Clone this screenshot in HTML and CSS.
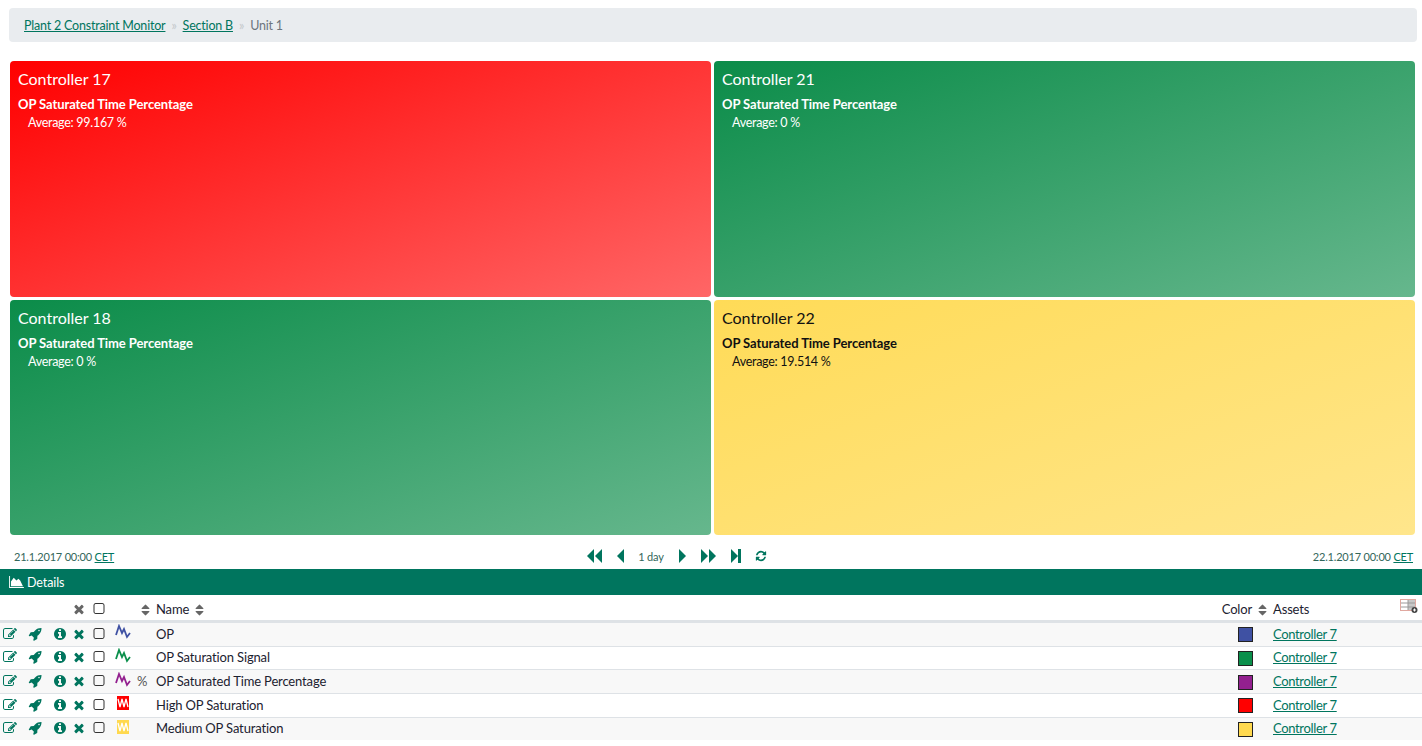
FILE: index.html
```html
<!DOCTYPE html>
<html>
<head>
	<title>Unit 1</title>
	<link rel="stylesheet" href="styles.css">
</head>
<body>
	<svg class="defs" width="0" height="0">
		<symbol id="i-edit" viewBox="0 0 1792 1792"><path d="M888 1184l116-116-152-152-116 116v56h96v96h56zm440-720q-16-16-33 1l-350 350q-17 17-1 33t33-1l350-350q17-17 1-33zm80 594v190q0 119-84.5 203.5t-203.5 84.5h-832q-119 0-203.5-84.5t-84.5-203.5v-832q0-119 84.5-203.5t203.5-84.5h832q63 0 117 25 15 7 18 23 3 17-9 29l-49 49q-14 14-32 8-23-6-45-6h-832q-66 0-113 47t-47 113v832q0 66 47 113t113 47h832q66 0 113-47t47-113v-126q0-13 9-22l64-64q15-15 35-7t20 29zm-96-738l288 288-672 672h-288v-288zm444 132l-92 92-288-288 92-92q28-28 68-28t68 28l152 152q28 28 28 68t-28 68z"/></symbol>
		<symbol id="i-rocket" viewBox="0 0 1792 1792"><path d="M1504 448q0-40-28-68t-68-28-68 28-28 68 28 68 68 28 68-28 28-68zm224-288q0 249-75.5 430.5t-253.5 360.5q-81 80-195 176l-20 379q-2 16-16 26l-384 224q-7 4-16 4-12 0-23-9l-64-64q-13-14-8-32l85-276-281-281-276 85q-3 1-9 1-14 0-23-9l-64-64q-17-19-5-39l224-384q10-14 26-16l379-20q96-114 176-195 188-187 358-258t431-71q14 0 24 9.5t10 22.5z"/></symbol>
		<symbol id="i-info" viewBox="0 0 1792 1792"><path d="M1152 1376v-160q0-14-9-23t-23-9h-96v-512q0-14-9-23t-23-9h-320q-14 0-23 9t-9 23v160q0 14 9 23t23 9h96v320h-96q-14 0-23 9t-9 23v160q0 14 9 23t23 9h448q14 0 23-9t9-23zm-128-896v-160q0-14-9-23t-23-9h-192q-14 0-23 9t-9 23v160q0 14 9 23t23 9h192q14 0 23-9t9-23zm640 416q0 209-103 385.5t-279.5 279.5-385.5 103-385.5-103-279.5-279.5-103-385.5 103-385.5 279.5-279.5 385.5-103 385.5 103 279.5 279.5 103 385.5z"/></symbol>
		<symbol id="i-times" viewBox="0 0 1792 1792"><path d="M1490 1322q0 40-28 68l-136 136q-28 28-68 28t-68-28l-294-294-294 294q-28 28-68 28t-68-28l-136-136q-28-28-28-68t28-68l294-294-294-294q-28-28-28-68t28-68l136-136q28-28 68-28t68 28l294 294 294-294q28-28 68-28t68 28l136 136q28 28 28 68t-28 68l-294 294 294 294q28 28 28 68z"/></symbol>
		<symbol id="i-square" viewBox="0 0 1408 1792"><path d="M1120 256h-832q-66 0-113 47t-47 113v832q0 66 47 113t113 47h832q66 0 113-47t47-113v-832q0-66-47-113t-113-47zm288 160v832q0 119-84.5 203.5t-203.5 84.5h-832q-119 0-203.5-84.5t-84.5-203.5v-832q0-119 84.5-203.5t203.5-84.5h832q119 0 203.5 84.5t84.5 203.5z"/></symbol>
		<symbol id="i-sort" viewBox="0 0 1024 1792"><path d="M1024 1088q0 26-19 45l-448 448q-19 19-45 19t-45-19l-448-448q-19-19-19-45t19-45 45-19h896q26 0 45 19t19 45zm0-384q0 26-19 45t-45 19h-896q-26 0-45-19t-19-45 19-45l448-448q19-19 45-19t45 19l448 448q19 19 19 45z"/></symbol>
		<symbol id="i-refresh" viewBox="0 0 1792 1792"><path d="M1639 1056q0 5-1 7-64 268-268 434.5t-478 166.5q-146 0-282.5-55t-243.5-157l-129 129q-19 19-45 19t-45-19-19-45v-448q0-26 19-45t45-19h448q26 0 45 19t19 45-19 45l-137 137q71 66 161 102t187 36q134 0 250-65t186-179q11-17 53-117 8-23 30-23h192q13 0 22.5 9.5t9.5 22.5zm25-800v448q0 26-19 45t-45 19h-448q-26 0-45-19t-19-45 19-45l138-138q-148-137-349-137-134 0-250 65t-186 179q-11 17-53 117-8 23-30 23h-199q-13 0-22.5-9.5t-9.5-22.5v-7q65-268 270-434.5t480-166.5q146 0 284 55.5t245 156.5l130-129q19-19 45-19t45 19 19 45z"/></symbol>
		<symbol id="i-spark" viewBox="0 0 16 16"><polyline points="1,11 4,2 7,9 9,5 12,13 15,9" fill="none" stroke="currentColor" stroke-width="1.8"/></symbol>
		<symbol id="i-band" viewBox="0 0 12 14"><rect width="12" height="14" fill="currentColor"/><polyline points="1,3 3,11 5,3 7,11 9,3 11,11" fill="none" stroke="#fff" stroke-width="1.3"/></symbol>
	</svg>

	<div class="breadcrumb">
		<a href="#">Plant 2 Constraint Monitor</a>
		<span class="sep">»</span>
		<a href="#">Section B</a>
		<span class="sep">»</span>
		<span class="current">Unit 1</span>
	</div>

	<div class="tiles">
		<div class="tile red">
			<div class="tile-title">Controller 17</div>
			<div class="tile-label">OP Saturated Time Percentage</div>
			<div class="tile-value">Average: 99.167 %</div>
		</div>
		<div class="tile green">
			<div class="tile-title">Controller 21</div>
			<div class="tile-label">OP Saturated Time Percentage</div>
			<div class="tile-value">Average: 0 %</div>
		</div>
		<div class="tile green">
			<div class="tile-title">Controller 18</div>
			<div class="tile-label">OP Saturated Time Percentage</div>
			<div class="tile-value">Average: 0 %</div>
		</div>
		<div class="tile yellow">
			<div class="tile-title">Controller 22</div>
			<div class="tile-label">OP Saturated Time Percentage</div>
			<div class="tile-value">Average: 19.514 %</div>
		</div>
	</div>

	<div class="timebar">
		<div class="time-edge">21.1.2017 00:00 <a href="#">CET</a></div>
		<div class="time-nav">
			<svg class="nav-icon wide" viewBox="0 0 16 14"><polygon points="8,0 8,14 1,7"/><polygon points="16,0 16,14 9,7"/></svg>
			<svg class="nav-icon" viewBox="0 0 8 14"><polygon points="8,0 8,14 1,7"/></svg>
			<span class="range">1 day</span>
			<svg class="nav-icon" viewBox="0 0 8 14"><polygon points="0,0 0,14 7,7"/></svg>
			<svg class="nav-icon wide" viewBox="0 0 16 14"><polygon points="0,0 0,14 7,7"/><polygon points="8,0 8,14 15,7"/></svg>
			<svg class="nav-icon end" viewBox="0 0 10 14"><polygon points="0,0 0,14 7,7"/><rect x="7" width="3" height="14"/></svg>
			<svg class="nav-refresh"><use href="#i-refresh"/></svg>
		</div>
		<div class="time-edge">22.1.2017 00:00 <a href="#">CET</a></div>
	</div>

	<div class="details-bar">
		<svg class="chart-icon" viewBox="0 0 16 13"><path d="M0 0h1v12h15v1H0z"/><path d="M2 11V6l3-4 3 3 2-2 2 2 3 6z"/></svg>
		Details
	</div>

	<table class="details">
		<colgroup>
			<col class="c-a"><col class="c-b"><col class="c-c"><col class="c-d"><col class="c-e"><col class="c-f"><col class="c-g">
			<col><col class="c-color"><col class="c-assets">
		</colgroup>
		<thead>
			<tr>
				<th></th><th></th><th></th>
				<th><svg class="ic grey"><use href="#i-times"/></svg></th>
				<th><svg class="ic box"><use href="#i-square"/></svg></th>
				<th></th>
				<th class="right"><svg class="sort"><use href="#i-sort"/></svg></th>
				<th>Name <svg class="sort gap"><use href="#i-sort"/></svg></th>
				<th class="right">Color <svg class="sort gap"><use href="#i-sort"/></svg></th>
				<th>Assets
					<svg class="columns" viewBox="0 0 18 14"><rect x="0.5" y="0.5" width="15" height="11" fill="#fff" stroke="#e0a8a0"/><rect x="8" y="1" width="7" height="10" fill="#c8c8c8"/><path d="M1 4h14M1 8h14M8 1v10" stroke="#9a9a9a" fill="none"/><circle cx="14.5" cy="11" r="3" fill="#444"/><path d="M13 11h3M14.5 9.500v3" stroke="#fff"/></svg>
				</th>
			</tr>
		</thead>
		<tbody>
			<tr>
				<td><svg class="ic"><use href="#i-edit"/></svg></td>
				<td><svg class="ic"><use href="#i-rocket"/></svg></td>
				<td><svg class="ic"><use href="#i-info"/></svg></td>
				<td><svg class="ic"><use href="#i-times"/></svg></td>
				<td><svg class="ic box"><use href="#i-square"/></svg></td>
				<td><svg class="spark blue"><use href="#i-spark"/></svg></td>
				<td></td>
				<td>OP</td>
				<td class="swatch-cell"><span class="swatch" style="background:#3f51a3"></span></td>
				<td><a href="#">Controller 7</a></td>
			</tr>
			<tr>
				<td><svg class="ic"><use href="#i-edit"/></svg></td>
				<td><svg class="ic"><use href="#i-rocket"/></svg></td>
				<td><svg class="ic"><use href="#i-info"/></svg></td>
				<td><svg class="ic"><use href="#i-times"/></svg></td>
				<td><svg class="ic box"><use href="#i-square"/></svg></td>
				<td><svg class="spark grn"><use href="#i-spark"/></svg></td>
				<td></td>
				<td>OP Saturation Signal</td>
				<td class="swatch-cell"><span class="swatch" style="background:#0a8f4b"></span></td>
				<td><a href="#">Controller 7</a></td>
			</tr>
			<tr>
				<td><svg class="ic"><use href="#i-edit"/></svg></td>
				<td><svg class="ic"><use href="#i-rocket"/></svg></td>
				<td><svg class="ic"><use href="#i-info"/></svg></td>
				<td><svg class="ic"><use href="#i-times"/></svg></td>
				<td><svg class="ic box"><use href="#i-square"/></svg></td>
				<td><svg class="spark purple"><use href="#i-spark"/></svg></td>
				<td class="pct">%</td>
				<td>OP Saturated Time Percentage</td>
				<td class="swatch-cell"><span class="swatch" style="background:#93208f"></span></td>
				<td><a href="#">Controller 7</a></td>
			</tr>
			<tr>
				<td><svg class="ic"><use href="#i-edit"/></svg></td>
				<td><svg class="ic"><use href="#i-rocket"/></svg></td>
				<td><svg class="ic"><use href="#i-info"/></svg></td>
				<td><svg class="ic"><use href="#i-times"/></svg></td>
				<td><svg class="ic box"><use href="#i-square"/></svg></td>
				<td><svg class="band redband"><use href="#i-band"/></svg></td>
				<td></td>
				<td>High OP Saturation</td>
				<td class="swatch-cell"><span class="swatch" style="background:#ff0000"></span></td>
				<td><a href="#">Controller 7</a></td>
			</tr>
			<tr>
				<td><svg class="ic"><use href="#i-edit"/></svg></td>
				<td><svg class="ic"><use href="#i-rocket"/></svg></td>
				<td><svg class="ic"><use href="#i-info"/></svg></td>
				<td><svg class="ic"><use href="#i-times"/></svg></td>
				<td><svg class="ic box"><use href="#i-square"/></svg></td>
				<td><svg class="band yelband"><use href="#i-band"/></svg></td>
				<td></td>
				<td>Medium OP Saturation</td>
				<td class="swatch-cell"><span class="swatch" style="background:#ffd94f"></span></td>
				<td><a href="#">Controller 7</a></td>
			</tr>
		</tbody>
	</table>
</body>
</html>
```

FILE: styles.css
```css
html, body {
	margin: 0;
	padding: 0;
}
body {
	height: 746px;
	overflow: hidden;
	background: #fff;
	color: #1c2230;
	font-family: "Lato", "Open Sans", sans-serif;
	font-size: 13px;
}
a {
	color: #00755e;
}
.defs {
	position: absolute;
}
.breadcrumb {
	display: flex;
	align-items: center;
	gap: 6px;
	height: 34px;
	margin: 8px 5px 0 9px;
	padding: 0 15px;
	background: #e9ecef;
	border-radius: 4px;
	font-size: 12.5px;
	letter-spacing: -0.2px;
}
.sep {
	color: #c4c8cc;
}
.current {
	color: #6c757d;
}
.tiles {
	display: grid;
	grid-template-columns: 701px 701px;
	grid-template-rows: 236px 235px;
	gap: 3px;
	margin: 19px 0 0 10px;
}
.tile {
	padding: 8px;
	border-radius: 4px;
	color: #fff;
}
.red {
	background: linear-gradient(160deg, #ff0000, #ff6666);
}
.green {
	background: linear-gradient(160deg, #0b8c49, #66b78d);
}
.yellow {
	background: linear-gradient(160deg, #ffdb57, #ffe68c);
	color: #111;
}
.tile-title {
	font-size: 16px;
	line-height: 19px;
}
.tile-label {
	margin-top: 7px;
	font-weight: bold;
	line-height: 18px;
	letter-spacing: -0.08px;
}
.tile-value {
	margin-top: 1px;
	padding-left: 10px;
	font-size: 12.5px;
	letter-spacing: -0.28px;
	line-height: 18px;
}
.timebar {
	display: flex;
	justify-content: space-between;
	align-items: center;
	height: 26px;
	padding: 8px 9px 0 14px;
	font-size: 11px;
	letter-spacing: -0.2px;
	color: #33665a;
}
.time-nav {
	display: flex;
	align-items: center;
	gap: 14px;
	margin-right: 74px;
}
.range {
	margin-right: 1px;
}
.nav-icon {
	height: 14px;
	width: 8px;
	fill: #00755e;
}
.nav-icon.wide {
	width: 16px;
}
.nav-icon.end {
	width: 10px;
}
.nav-refresh {
	width: 12px;
	height: 12px;
	fill: #00755e;
}
.details-bar {
	display: flex;
	align-items: center;
	gap: 3px;
	height: 26px;
	padding-left: 9px;
	background: #00755e;
	color: #fff;
	font-size: 12.5px;
	letter-spacing: -0.1px;
}
.chart-icon {
	width: 15px;
	height: 12px;
	fill: #fff;
}
.details {
	width: 100%;
	table-layout: fixed;
	border-collapse: collapse;
	margin-top: 1px;
	letter-spacing: -0.15px;
}
.c-a { width: 25px; }
.c-b { width: 25px; }
.c-c { width: 19px; }
.c-d { width: 20px; }
.c-e { width: 23px; }
.c-f { width: 22px; }
.c-g { width: 22px; }
.c-color { width: 56px; }
.c-assets { width: 149px; }
.details th {
	height: 23px;
	padding: 1px 0 0;
	font-weight: normal;
	text-align: left;
	white-space: nowrap;
	border-bottom: 3px solid #dee2e6;
	position: relative;
}
.details th.right {
	text-align: right;
	padding-right: 6px;
}
.details td {
	height: 21.67px;
	padding: 0 0 1px;
	border-bottom: 1px solid #dee2e6;
}
.details td a {
	letter-spacing: -0.35px;
}
.details tbody tr:nth-child(odd) {
	background: #f8f8f8;
}
.details tbody tr:last-child td {
	border-bottom: 0;
}
.ic {
	display: block;
	width: 14px;
	height: 14px;
	margin-left: 3px;
	fill: #00755e;
}
.ic.grey {
	fill: #666;
}
.ic.box {
	fill: #333;
}
.sort {
	width: 9px;
	height: 14px;
	fill: #666;
	vertical-align: -3px;
}
.sort.gap {
	margin-left: 3px;
}
.spark, .band {
	display: block;
	margin-top: -3px;
}
.spark {
	width: 16px;
	height: 16px;
	margin-left: 3px;
}
.band {
	width: 12px;
	height: 14px;
	margin-left: 5px;
}
.blue { color: #3f51a3; }
.grn { color: #0a8f4b; }
.purple { color: #93208f; }
.redband { color: #ff0000; }
.yelband { color: #ffd94f; }
.details .pct {
	color: #555;
	padding-left: 3px;
}
.swatch-cell {
	text-align: center;
}
.swatch {
	display: inline-block;
	width: 13px;
	height: 13px;
	border: 1px solid #222;
	vertical-align: middle;
}
.columns {
	position: absolute;
	top: 3px;
	right: 4px;
	width: 18px;
	height: 14px;
}
```
